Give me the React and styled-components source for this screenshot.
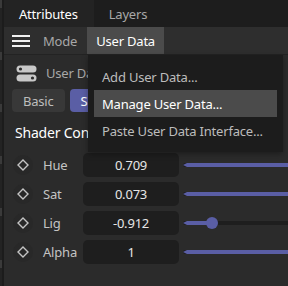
import React from 'react';
import styled, { createGlobalStyle } from 'styled-components';

const GlobalStyle = createGlobalStyle`
  html, body {
    margin: 0;
    padding: 0;
    background: #2b2b2b;
  }
  body {
    font-family: 'Noto Sans', 'Open Sans', sans-serif;
    letter-spacing: -0.2px;
  }
`;

const Frame = styled.div`
  position: relative;
  display: flex;
  width: 288px;
  height: 286px;
  overflow: hidden;
  background: #2b2b2b;
`;

const EdgeStrip = styled.div`
  width: 2px;
  flex-shrink: 0;
  background: repeating-linear-gradient(
    to bottom,
    #3a3a3a 0px,
    #3a3a3a 8px,
    #232323 8px,
    #232323 52px
  );
  border-right: 2px solid #1c1c1c;
`;

const Panel = styled.div`
  flex: 1;
  display: flex;
  flex-direction: column;
  min-width: 0;
`;

const TabBar = styled.div`
  display: flex;
  height: 27px;
  background: #1d1d1d;
`;

const Tab = styled.div`
  display: flex;
  align-items: center;
  padding: 0 16px 0 15px;
  font-size: 13px;
  color: ${({ $active }) => ($active ? '#ffffff' : '#a8a8a8')};
  background: ${({ $active }) => ($active ? '#232323' : 'transparent')};
`;

const Toolbar = styled.div`
  display: flex;
  align-items: center;
  height: 27px;
  background: #2e2e2e;
  border-bottom: 1px solid #232323;
`;

const Burger = styled.div`
  display: flex;
  flex-direction: column;
  gap: 3px;
  width: 18px;
  margin: 0 13px 0 8px;
  & span {
    height: 2px;
    background: #f0f0f0;
  }
`;

const ModeLabel = styled.div`
  font-size: 13px;
  color: #a8a8a8;
  margin-right: 10px;
`;

const MenuButton = styled.div`
  display: flex;
  align-items: center;
  height: 27px;
  padding: 0 9px;
  font-size: 13px;
  color: #ffffff;
  background: #4b4b4b;
`;

const Content = styled.div`
  display: flex;
  flex-direction: column;
  padding: 9px 0 0 8px;
`;

const GroupRow = styled.div`
  display: flex;
  align-items: center;
  gap: 9px;
  height: 18px;
  padding-left: 4px;
  font-size: 13px;
  color: #a8a8a8;
  white-space: nowrap;
`;

const ModeTabs = styled.div`
  display: flex;
  gap: 5px;
  margin-top: 7px;
`;

const ModeTab = styled.div`
  display: flex;
  align-items: center;
  height: 23px;
  padding: 0 11px;
  border-radius: 4px;
  font-size: 13px;
  color: ${({ $active }) => ($active ? '#ffffff' : '#bdbdbd')};
  background: ${({ $active }) => ($active ? '#5a5ea5' : '#383838')};
`;

const SectionTitle = styled.div`
  margin-top: 11px;
  padding-left: 3px;
  font-size: 14px;
  color: #ffffff;
  white-space: nowrap;
`;

const ParamList = styled.div`
  display: flex;
  flex-direction: column;
  gap: 5px;
  margin-top: 11px;
`;

const ParamRow = styled.div`
  display: flex;
  align-items: center;
  height: 24px;
`;

const KeyDot = styled.div`
  display: flex;
  align-items: center;
  justify-content: center;
  width: 20px;
  height: 20px;
  margin-left: 1px;
  border-radius: 50%;
  background: #282828;
`;

const ParamLabel = styled.div`
  width: 40px;
  margin-left: 10px;
  font-size: 13px;
  color: #c4c4c4;
`;

const ValueField = styled.div`
  display: flex;
  align-items: center;
  justify-content: center;
  width: 96px;
  height: 24px;
  border-radius: 5px;
  background: #1e1e1e;
  font-size: 13px;
  color: #e6e6e6;
`;

const Slider = styled.div`
  position: relative;
  flex: 1;
  height: 4px;
  margin-left: 4px;
  background: #1e1e1e;
  border-radius: 2px 0 0 2px;
`;

const SliderFill = styled.div`
  height: 100%;
  background: #5a5ea5;
  clip-path: polygon(0 50%, 4px 0, 100% 0, 100% 100%, 4px 100%);
`;

const SliderThumb = styled.div`
  position: absolute;
  top: 50%;
  width: 12px;
  height: 12px;
  margin: -6px 0 0 -6px;
  border-radius: 50%;
  background: #5a5ea5;
`;

const Menu = styled.div`
  position: absolute;
  left: 88px;
  top: 55px;
  width: 195px;
  height: 97px;
  box-sizing: border-box;
  padding: 8px 6px;
  display: flex;
  flex-direction: column;
  background: #1c1c1c;
  box-shadow: 0 2px 6px rgba(0, 0, 0, 0.35);
`;

const MenuItem = styled.div`
  display: flex;
  align-items: center;
  height: 27px;
  padding-left: 8px;
  font-size: 13px;
  white-space: nowrap;
  color: ${({ $hover }) => ($hover ? '#ffffff' : '#bcbcbc')};
  background: ${({ $hover }) => ($hover ? '#4b4b4b' : 'transparent')};
`;

const Diamond = () => (
  <svg width="12" height="12" viewBox="0 0 12 12">
    <path d="M6 1 L11 6 L6 11 L1 6 Z" fill="none" stroke="#c4c4c4" strokeWidth="1.4" />
  </svg>
);

const ToggleIcon = () => (
  <svg width="21" height="17" viewBox="0 0 21 17">
    <rect x="0.5" y="0.5" width="20" height="7" rx="3.5" fill="#c8c8c8" />
    <rect x="0.5" y="9.5" width="20" height="7" rx="3.5" fill="#c8c8c8" />
    <circle cx="4.5" cy="4" r="1.6" fill="#2b2b2b" />
    <circle cx="16.5" cy="13" r="1.6" fill="#2b2b2b" />
  </svg>
);

const params = [
  { name: 'Hue', value: '0.709', fill: 100 },
  { name: 'Sat', value: '0.073', fill: 100 },
  { name: 'Lig', value: '-0.912', fill: 28, thumb: true },
  { name: 'Alpha', value: '1', fill: 100 },
];

const App = () => {
  return (
    <Frame>
      <GlobalStyle />
      <EdgeStrip />
      <Panel>
        <TabBar>
          <Tab $active>Attributes</Tab>
          <Tab>Layers</Tab>
        </TabBar>
        <Toolbar>
          <Burger>
            <span />
            <span />
            <span />
          </Burger>
          <ModeLabel>Mode</ModeLabel>
          <MenuButton>User Data</MenuButton>
        </Toolbar>
        <Content>
          <GroupRow>
            <ToggleIcon />
            User Data
          </GroupRow>
          <ModeTabs>
            <ModeTab>Basic</ModeTab>
            <ModeTab $active>Shader</ModeTab>
          </ModeTabs>
          <SectionTitle>Shader Controls</SectionTitle>
          <ParamList>
            {params.map((p) => (
              <ParamRow key={p.name}>
                <KeyDot>
                  <Diamond />
                </KeyDot>
                <ParamLabel>{p.name}</ParamLabel>
                <ValueField>{p.value}</ValueField>
                <Slider>
                  <SliderFill style={{ width: `${p.fill}%` }} />
                  {p.thumb && <SliderThumb style={{ left: `${p.fill}%` }} />}
                </Slider>
              </ParamRow>
            ))}
          </ParamList>
        </Content>
      </Panel>
      <Menu>
        <MenuItem>Add User Data...</MenuItem>
        <MenuItem $hover>Manage User Data...</MenuItem>
        <MenuItem>Paste User Data Interface...</MenuItem>
      </Menu>
    </Frame>
  );
};

export default App;
